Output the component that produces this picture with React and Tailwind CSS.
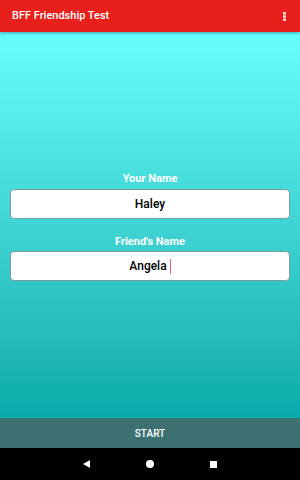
import React from "react";

const App = () => {
  return (
    <div
      className="w-[300px] h-[480px] flex flex-col overflow-hidden"
      style={{ fontFamily: "Roboto, 'Liberation Sans', sans-serif" }}
    >
      {/* App bar */}
      <div className="h-[32px] bg-[#e8201b] flex items-center justify-between pl-[12px] pr-[14px] shadow-[0_1px_3px_rgba(0,0,0,0.35)] z-10">
        <span className="text-white text-[11px] font-medium">BFF Friendship Test</span>
        <svg width="3" height="9" viewBox="0 0 3 9" fill="white">
          <rect x="0.25" y="0" width="2.5" height="2.5" />
          <rect x="0.25" y="3.25" width="2.5" height="2.5" />
          <rect x="0.25" y="6.5" width="2.5" height="2.5" />
        </svg>
      </div>

      {/* Content */}
      <div className="flex-1 bg-gradient-to-b from-[#66ffff] to-[#05aaaa] flex flex-col justify-center px-[10px] pb-[8px] pt-[11px]">
        <div className="flex flex-col items-center">
          <div className="text-white text-[11px] font-bold leading-[14px] mb-[3px]">Your Name</div>
          <div className="w-full h-[30px] bg-white border border-[#7c9aa0] rounded-[4px] flex items-center justify-center text-[12px] font-medium text-black">
            Haley
          </div>
          <div className="text-white text-[11px] font-bold leading-[14px] mt-[16px] mb-[2px]">Friend's Name</div>
          <div className="w-full h-[30px] bg-white border border-[#7c9aa0] rounded-[4px] flex items-center justify-center text-[12px] font-medium text-black">
            <span>Angela</span>
            <span className="ml-[3px] w-[1px] h-[15px] bg-[#e8607a]" />
          </div>
        </div>
      </div>

      {/* Start button */}
      <div className="h-[30px] bg-[#3d7070] flex items-center justify-center text-white text-[10px] font-medium">
        START
      </div>

      {/* Nav bar */}
      <div className="h-[32px] bg-black flex items-center justify-center gap-[56px]">
        <svg width="7" height="8" viewBox="0 0 7 8" fill="white">
          <polygon points="7,0 7,8 0,4" />
        </svg>
        <svg width="8" height="8" viewBox="0 0 8 8" fill="white">
          <circle cx="4" cy="4" r="4" />
        </svg>
        <svg width="7" height="7" viewBox="0 0 7 7" fill="white">
          <rect width="7" height="7" />
        </svg>
      </div>
    </div>
  );
};

export default App;
